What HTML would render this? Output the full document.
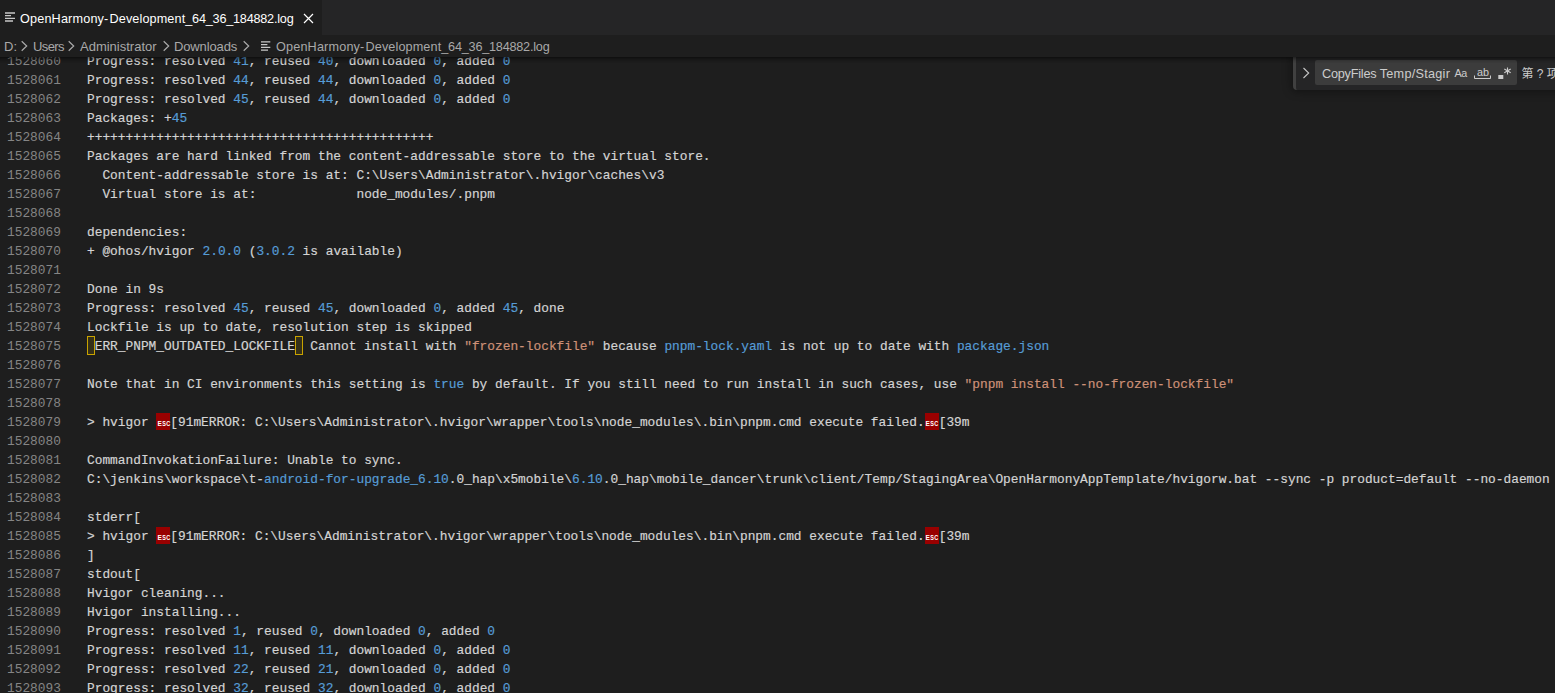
<!DOCTYPE html>
<html><head><meta charset="utf-8">
<style>
html,body{margin:0;padding:0;background:#1e1e1e;overflow:hidden}
body{width:1555px;height:693px;position:relative;font-family:"Liberation Sans","Noto Sans CJK SC",sans-serif;color:#ccc}
#tabs{position:absolute;left:0;top:0;width:1555px;height:35px;background:#252526}
#tab{position:absolute;left:0;top:0;width:322px;height:35px;background:#1e1e1e}
#tab .lbl{position:absolute;left:20px;top:2px;line-height:35px;font-size:12.66px;color:#fff;white-space:nowrap}
#crumbs{position:absolute;left:0;top:35px;width:1555px;height:22px;background:#1e1e1e;font-size:13px;color:#a9a9a9;white-space:nowrap}
#crumbs span{position:absolute;top:1px;line-height:22px}#crumbs svg{position:absolute}
#ed{position:absolute;left:0;top:57px;width:1555px;height:636px;overflow:hidden;background:#1e1e1e}
#lines{position:absolute;left:0;top:-5px;width:1555px;font-family:"Liberation Mono",monospace;font-size:12.83px;line-height:19px;color:#d4d4d4}
.l{height:19px;position:relative}
.n{position:absolute;left:7px;top:0;color:#858585}
.c{position:absolute;left:87px;top:0;white-space:pre;-webkit-text-stroke:0.18px}
.b{color:#569cd6}.s{color:#ce9178}
.esc{display:inline-block;width:14px;height:17px;background:#990000;vertical-align:top;position:relative;-webkit-text-stroke:0}
.esc i{position:absolute;left:-3px;width:20px;bottom:2px;text-align:center;font:bold 6.4px/8px "Liberation Sans",sans-serif;color:#fff;transform:scaleX(.86);letter-spacing:0.3px;left:-2.6px}
.esc i b{font-weight:bold;font-size:7.6px}
.box{display:inline-block;width:7.7px;height:19px;vertical-align:top;position:relative}.box:after{content:'';position:absolute;left:0;top:-1px;width:8px;height:19px;box-sizing:border-box;border:1px solid #c9a300;background:rgba(189,155,3,.15)}
#shadow{position:absolute;left:0;top:57px;width:1555px;height:6px;box-shadow:#000 0 6px 6px -6px inset;pointer-events:none}
#fw{position:absolute;left:1255px;top:57px;width:300px;height:70px;overflow:hidden}
#fi{position:absolute;left:0.6px;top:0;width:1px;height:1px}
#find{position:absolute;left:38.4px;top:0;width:270px;height:33px;background:#252526;box-shadow:0 0 8px 2px rgba(0,0,0,.36);border-left:3px solid #404040;border-bottom-left-radius:4px;box-sizing:border-box}
#find .inp{position:absolute;left:18px;top:3px;width:202px;height:25px;background:#3c3c3c;border-radius:2px}
#find .q{position:absolute;left:25px;top:5px;line-height:25px;font-size:12.7px;color:#ccc;white-space:nowrap}
#find .aa{position:absolute;left:157.5px;top:4px;line-height:25px;font-size:10.8px;letter-spacing:-0.4px;color:#ccc;white-space:nowrap}
#find .ab{position:absolute;left:180px;top:3px;line-height:25px;font-size:10.8px;color:#ccc;white-space:nowrap}
#find .cnt{position:absolute;left:224.5px;top:5px;line-height:25px;font-size:12px;color:#ccc;white-space:nowrap}
i.fa,i.fb,i.fc,i.fd{font-style:normal}i.fa{letter-spacing:.16px}i.fb{letter-spacing:1.2px}i.fc{letter-spacing:.11px}i.fd{letter-spacing:-.22px}
</style></head><body>
<div id="tabs"><div id="tab">
<svg style="position:absolute;left:5px;top:12px" width="11" height="11" viewBox="0 0 11 11"><path d="M0 1h10M0 3.65h6M0 6.4h10M0 9h8" stroke="#c8c8c8" stroke-width="1.4" fill="none"/></svg>
<span class="lbl"><i class="fa">OpenHarmony</i><i class="fb">-</i><i class="fc">Development</i><i class="fd">_64_36_184882.log</i></span>
<svg style="position:absolute;left:303px;top:12.5px" width="11" height="11" viewBox="0 0 11 11"><path d="M1 1l9 9M10 1l-9 9" stroke="#fff" stroke-width="1.2" fill="none"/></svg>
</div></div>
<div id="crumbs">
<span style="left:4px">D:</span>
<span style="left:33px;letter-spacing:-0.6px">Users</span>
<span style="left:80px">Administrator</span>
<span style="left:174px;letter-spacing:-.13px">Downloads</span>
<span style="left:276px;font-size:12.66px"><i class="fa">OpenHarmony</i><i class="fb">-</i><i class="fc">Development</i><i class="fd">_64_36_184882.log</i></span>
<svg style="left:20px;top:5px" width="9" height="12" viewBox="0 0 9 12"><path d="M1.7 1.2l5 4.8-5 4.8" stroke="#a9a9a9" stroke-width="1.2" fill="none"/></svg>
<svg style="left:67px;top:5px" width="9" height="12" viewBox="0 0 9 12"><path d="M1.7 1.2l5 4.8-5 4.8" stroke="#a9a9a9" stroke-width="1.2" fill="none"/></svg>
<svg style="left:161.7px;top:5px" width="9" height="12" viewBox="0 0 9 12"><path d="M1.7 1.2l5 4.8-5 4.8" stroke="#a9a9a9" stroke-width="1.2" fill="none"/></svg>
<svg style="left:241.5px;top:5px" width="9" height="12" viewBox="0 0 9 12"><path d="M1.7 1.2l5 4.8-5 4.8" stroke="#a9a9a9" stroke-width="1.2" fill="none"/></svg>
<svg style="left:261px;top:5px" width="11" height="11" viewBox="0 0 11 11"><path d="M0 1.8h9.3M0 4.6h6.4M0 7.4h9.3M0 10.2h7" stroke="#c8c8c8" stroke-width="1.2" fill="none"/></svg>
</div>
<div id="ed"><div id="lines">
<div class="l"><span class="n">1528060</span><span class="c">Progress: resolved <span class="b">41</span>, reused <span class="b">40</span>, downloaded <span class="b">0</span>, added <span class="b">0</span></span></div>
<div class="l"><span class="n">1528061</span><span class="c">Progress: resolved <span class="b">44</span>, reused <span class="b">44</span>, downloaded <span class="b">0</span>, added <span class="b">0</span></span></div>
<div class="l"><span class="n">1528062</span><span class="c">Progress: resolved <span class="b">45</span>, reused <span class="b">44</span>, downloaded <span class="b">0</span>, added <span class="b">0</span></span></div>
<div class="l"><span class="n">1528063</span><span class="c">Packages: +<span class="b">45</span></span></div>
<div class="l"><span class="n">1528064</span><span class="c">+++++++++++++++++++++++++++++++++++++++++++++</span></div>
<div class="l"><span class="n">1528065</span><span class="c">Packages are hard linked from the content-addressable store to the virtual store.</span></div>
<div class="l"><span class="n">1528066</span><span class="c">  Content-addressable store is at: C:\Users\Administrator\.hvigor\caches\v3</span></div>
<div class="l"><span class="n">1528067</span><span class="c">  Virtual store is at:             node_modules/.pnpm</span></div>
<div class="l"><span class="n">1528068</span><span class="c"></span></div>
<div class="l"><span class="n">1528069</span><span class="c">dependencies:</span></div>
<div class="l"><span class="n">1528070</span><span class="c">+ @ohos/hvigor <span class="b">2.0.0</span> (<span class="b">3.0.2</span> is available)</span></div>
<div class="l"><span class="n">1528071</span><span class="c"></span></div>
<div class="l"><span class="n">1528072</span><span class="c">Done in 9s</span></div>
<div class="l"><span class="n">1528073</span><span class="c">Progress: resolved <span class="b">45</span>, reused <span class="b">45</span>, downloaded <span class="b">0</span>, added <span class="b">45</span>, done</span></div>
<div class="l"><span class="n">1528074</span><span class="c">Lockfile is up to date, resolution step is skipped</span></div>
<div class="l"><span class="n">1528075</span><span class="c"><span class="box"></span>ERR_PNPM_OUTDATED_LOCKFILE<span class="box"></span> Cannot install with <span class="s">"frozen-lockfile"</span> because <span class="b">pnpm-lock.yaml</span> is not up to date with <span class="b">package.json</span></span></div>
<div class="l"><span class="n">1528076</span><span class="c"></span></div>
<div class="l"><span class="n">1528077</span><span class="c">Note that in CI environments this setting is <span class="b">true</span> by default. If you still need to run install in such cases, use <span class="s">"pnpm install --no-frozen-lockfile"</span></span></div>
<div class="l"><span class="n">1528078</span><span class="c"></span></div>
<div class="l"><span class="n">1528079</span><span class="c">&gt; hvigor <span class="esc"><i><b>E</b>SC</i></span>[91mERROR: C:\Users\Administrator\.hvigor\wrapper\tools\node_modules\.bin\pnpm.cmd execute failed.<span class="esc"><i><b>E</b>SC</i></span>[39m</span></div>
<div class="l"><span class="n">1528080</span><span class="c"></span></div>
<div class="l"><span class="n">1528081</span><span class="c">CommandInvokationFailure: Unable to sync.</span></div>
<div class="l"><span class="n">1528082</span><span class="c">C:\jenkins\workspace\t-<span class="b">android-for-upgrade_6.10</span>.0_hap\x5mobile\<span class="b">6.10</span>.0_hap\mobile_dancer\trunk\client/Temp/StagingArea\OpenHarmonyAppTemplate/hvigorw.bat --sync -p product=default --no-daemon</span></div>
<div class="l"><span class="n">1528083</span><span class="c"></span></div>
<div class="l"><span class="n">1528084</span><span class="c">stderr[</span></div>
<div class="l"><span class="n">1528085</span><span class="c">&gt; hvigor <span class="esc"><i><b>E</b>SC</i></span>[91mERROR: C:\Users\Administrator\.hvigor\wrapper\tools\node_modules\.bin\pnpm.cmd execute failed.<span class="esc"><i><b>E</b>SC</i></span>[39m</span></div>
<div class="l"><span class="n">1528086</span><span class="c">]</span></div>
<div class="l"><span class="n">1528087</span><span class="c">stdout[</span></div>
<div class="l"><span class="n">1528088</span><span class="c">Hvigor cleaning...</span></div>
<div class="l"><span class="n">1528089</span><span class="c">Hvigor installing...</span></div>
<div class="l"><span class="n">1528090</span><span class="c">Progress: resolved <span class="b">1</span>, reused <span class="b">0</span>, downloaded <span class="b">0</span>, added <span class="b">0</span></span></div>
<div class="l"><span class="n">1528091</span><span class="c">Progress: resolved <span class="b">11</span>, reused <span class="b">11</span>, downloaded <span class="b">0</span>, added <span class="b">0</span></span></div>
<div class="l"><span class="n">1528092</span><span class="c">Progress: resolved <span class="b">22</span>, reused <span class="b">21</span>, downloaded <span class="b">0</span>, added <span class="b">0</span></span></div>
<div class="l"><span class="n">1528093</span><span class="c">Progress: resolved <span class="b">32</span>, reused <span class="b">32</span>, downloaded <span class="b">0</span>, added <span class="b">0</span></span></div>
</div></div>
<div id="fw"><div id="find"><div id="fi">
<svg style="position:absolute;left:5px;top:10px" width="9" height="12" viewBox="0 0 9 12"><path d="M1.5 1l5.2 5-5.2 5" stroke="#c5c5c5" stroke-width="1.1" fill="none"/></svg>
<div class="inp"></div>
<span class="q"><i class="fa" style="letter-spacing:-.22px">CopyFiles </i><i class="fa" style="letter-spacing:.25px">Temp/Stagir</i></span>
<span class="aa">Aa</span>
<span class="ab">ab</span>
<svg style="position:absolute;left:177px;top:18px" width="18" height="5" viewBox="0 0 18 5"><path d="M0.5 0.5v3h16v-3" stroke="#ccc" stroke-width="1" fill="none"/></svg>
<svg style="position:absolute;left:200px;top:9px" width="16" height="14" viewBox="0 0 16 14"><rect x="1.3" y="9" width="5" height="4" fill="#ccc"/><path d="M10.5 1.6v6.8M7.3 3.1l6.4 3.7M13.7 3.1l-6.4 3.7" stroke="#ccc" stroke-width="1.1" fill="none"/></svg>
<span class="cnt">第 ? 项，共 ? 项</span>
</div></div></div>
<div id="shadow"></div>
</body></html>
